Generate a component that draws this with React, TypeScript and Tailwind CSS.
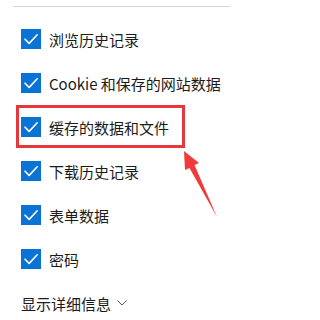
const items = [
  "浏览历史记录",
  "Cookie 和保存的网站数据",
  "缓存的数据和文件",
  "下载历史记录",
  "表单数据",
  "密码",
];

function CheckBox() {
  return (
    <span className="flex h-[20px] w-[20px] shrink-0 items-center justify-center bg-[#0a74d6]">
      <svg width="20" height="20" viewBox="0 0 20 20" fill="none">
        <path d="M4 10.2l4.2 4.2L16.2 5.8" stroke="#fff" strokeWidth="1.6" strokeLinecap="round" strokeLinejoin="round" />
      </svg>
    </span>
  );
}

export default function App() {
  return (
    <div
      className="relative h-[320px] w-[230px] overflow-hidden bg-white text-[15px] text-[#1b1b1b]"
      style={{ fontFamily: '"Microsoft YaHei", "Noto Sans CJK SC", sans-serif' }}
    >
      <div className="ml-[13px] mt-[6px] h-px bg-[#d6d6d6]" />
      <div className="mt-[10px] flex flex-col pl-[21px]">
        {items.map((label, i) => (
          <div key={label} className="relative flex h-[44px] items-center gap-[8px]">
            {i === 2 && (
              <div className="absolute left-[-5px] top-0 h-[43px] w-[169px] border-[3px] border-[#e5383b]" />
            )}
            <CheckBox />
            <span className="leading-none">{label}</span>
          </div>
        ))}
        <div className="flex h-[44px] items-center gap-[6px]">
          <span className="leading-none">显示详细信息</span>
          <svg width="10" height="6" viewBox="0 0 10 6" fill="none">
            <path d="M0.5 0.5L5 5l4.5-4.5" stroke="#555" strokeWidth="1" />
          </svg>
        </div>
      </div>
      <svg className="absolute left-0 top-0" width="230" height="320" viewBox="0 0 230 320">
        <polygon points="184,151 199,163 194.5,165 217,217 189.5,168 185,170" fill="#ef3b3b" />
      </svg>
    </div>
  );
}
